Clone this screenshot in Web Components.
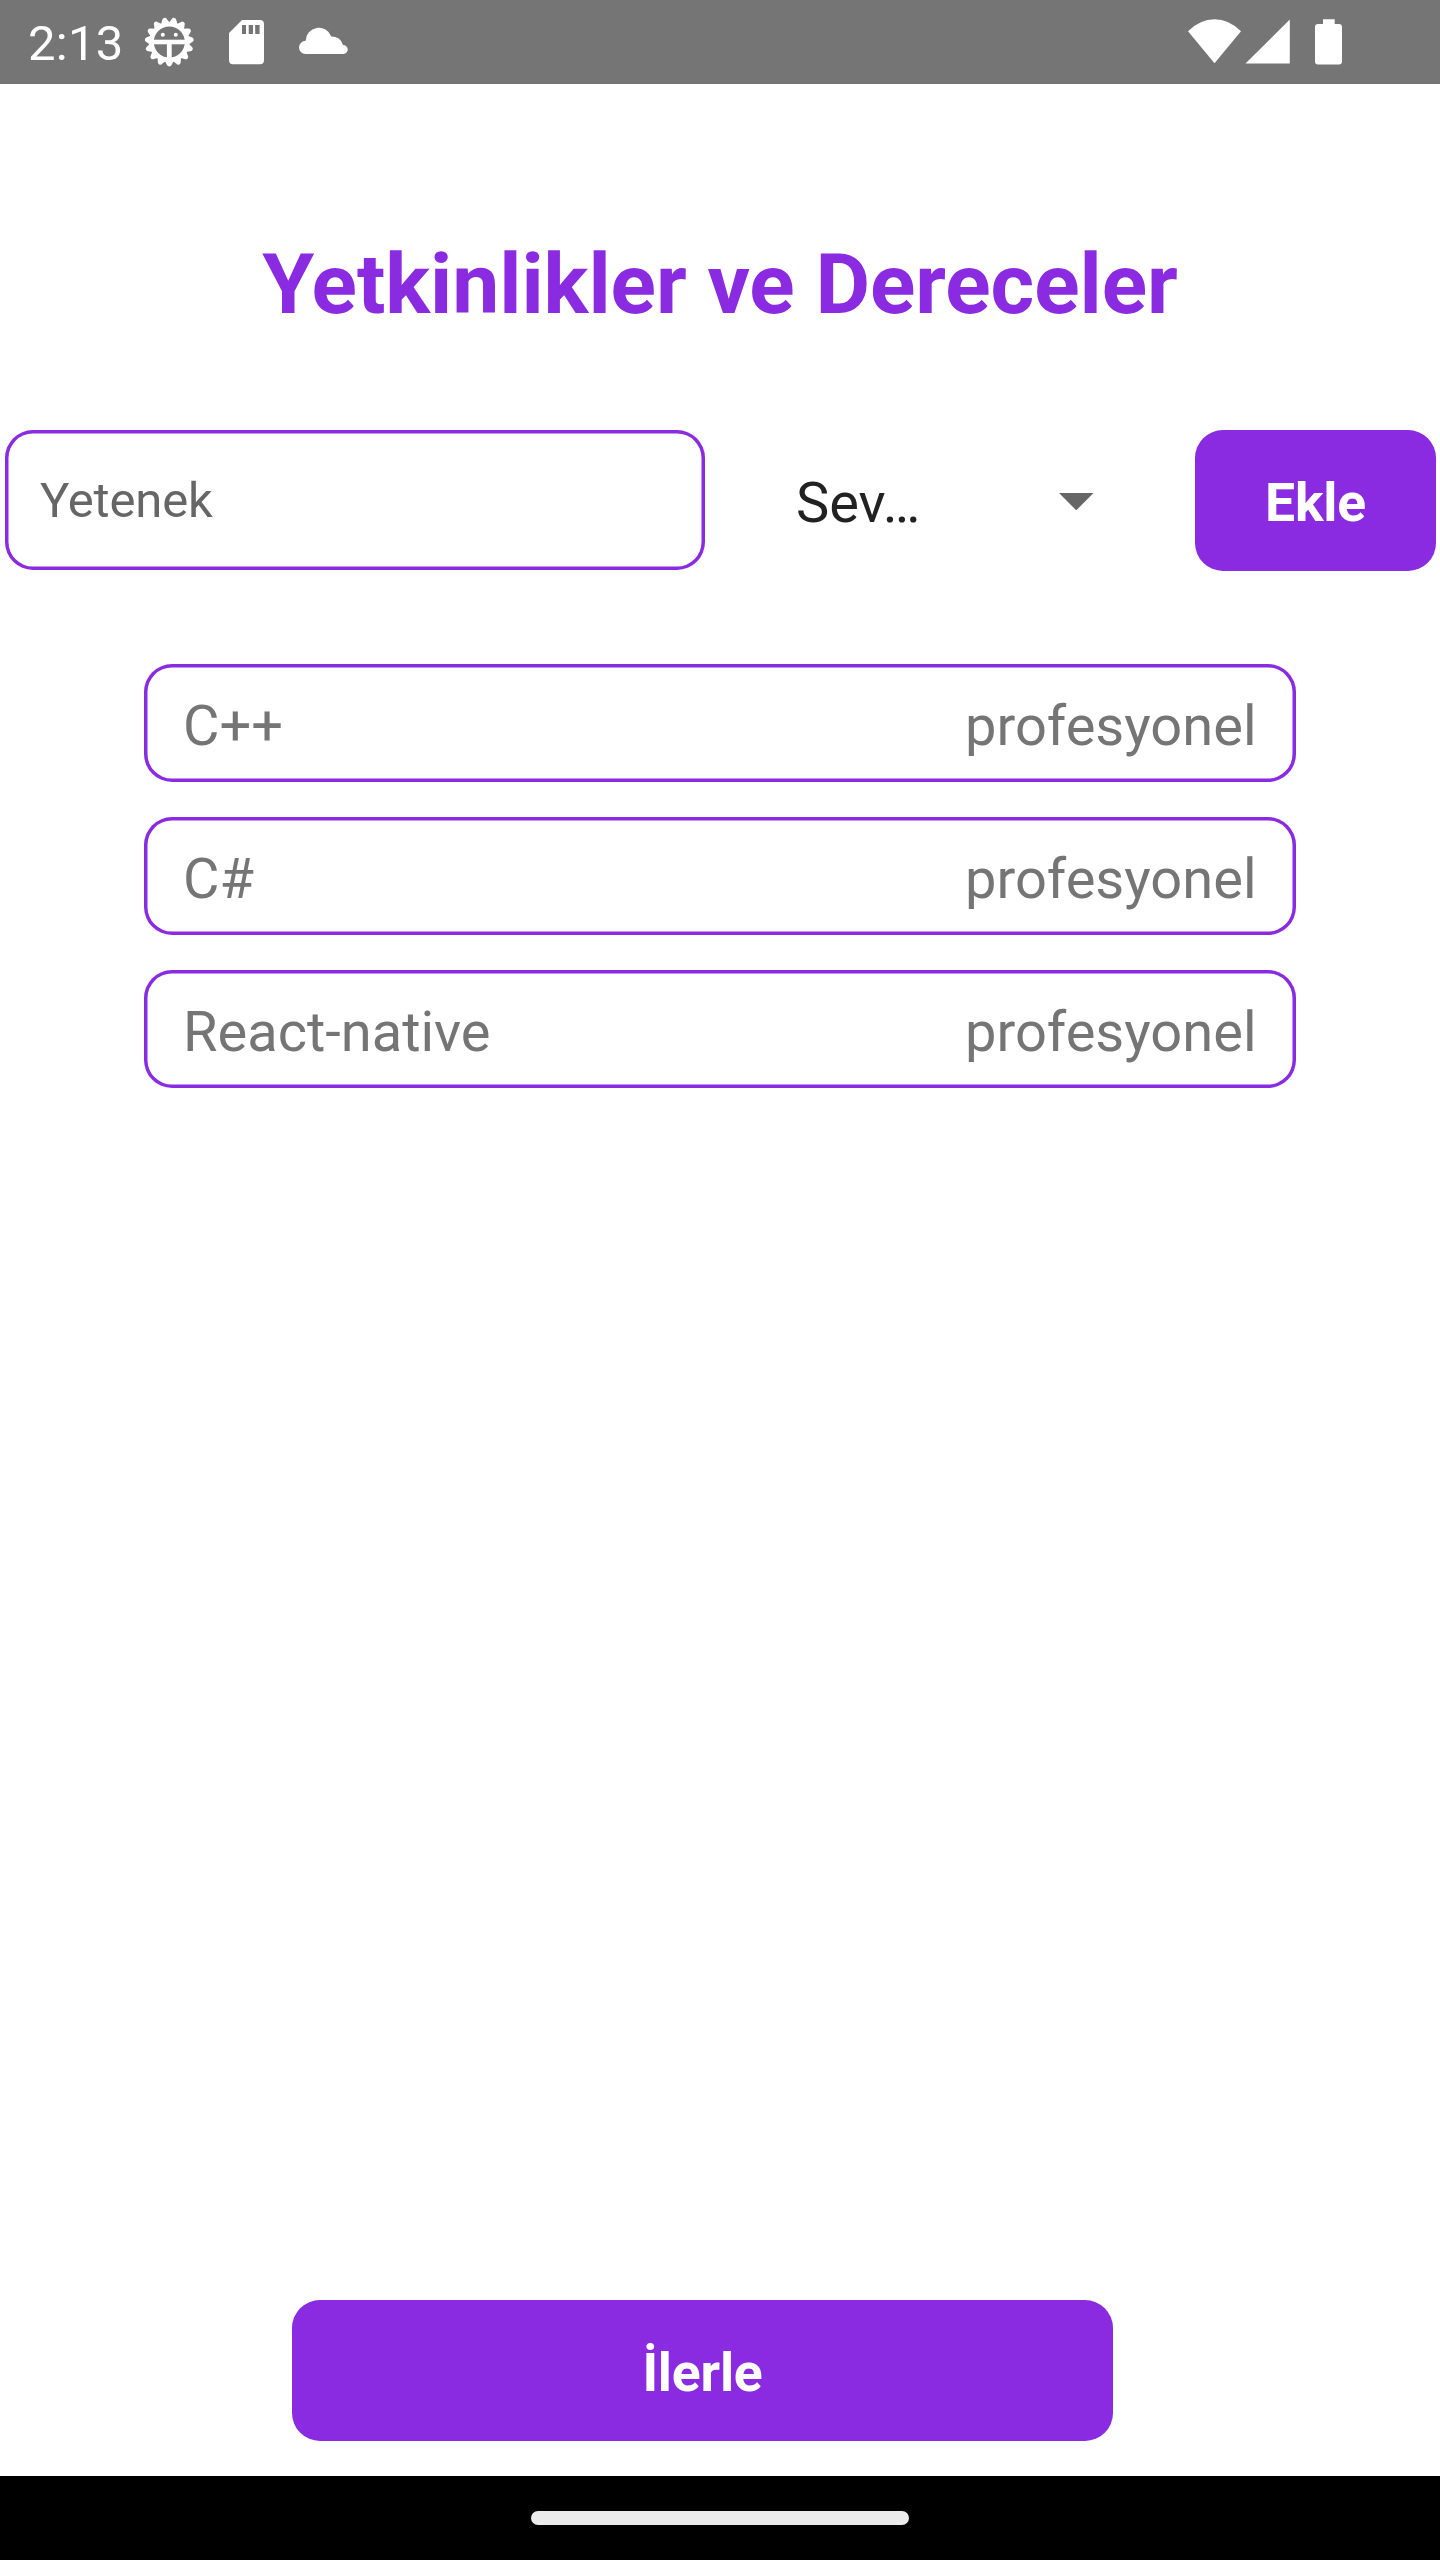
<!DOCTYPE html>
<html lang="tr">
<head>
<meta charset="utf-8">
<title>Yetkinlikler ve Dereceler</title>
<style>
  html, body { margin: 0; background: #fff; }
  body { font-family: Roboto, sans-serif; --accent: #8a2be2; }
</style>
</head>
<body>
<app-screen>
  <status-bar slot="status">2:13</status-bar>
  <page-title>Yetkinlikler ve Dereceler</page-title>
  <entry-row>
    <text-field>Yetenek</text-field>
    <level-picker>Sev…</level-picker>
    <action-button style="width:241px">Ekle</action-button>
  </entry-row>
  <skill-list>
    <skill-item><span>C++</span><span slot="level">profesyonel</span></skill-item>
    <skill-item><span>C#</span><span slot="level">profesyonel</span></skill-item>
    <skill-item><span>React-native</span><span slot="level">profesyonel</span></skill-item>
  </skill-list>
  <action-button slot="footer" style="width:821px;margin-left:292px">İlerle</action-button>
  <nav-bar slot="nav"></nav-bar>
</app-screen>
<script>
const define = (name, html, after) => customElements.define(name, class extends HTMLElement {
  constructor() {
    super();
    this.attachShadow({ mode: 'open' }).innerHTML = html;
    if (after) after(this.shadowRoot);
  }
});

define('app-screen', `
<style>
  :host { display: flex; flex-direction: column; width: 1440px; height: 2560px; overflow: hidden; background: #fff; }
  main { flex: 1; display: flex; flex-direction: column; }
  footer { padding-bottom: 35px; }
</style>
<slot name="status"></slot><main><slot></slot></main><footer><slot name="footer"></slot></footer><slot name="nav"></slot>`);

// 15 evenly spaced teeth, one pointing straight down
const drawTeeth = root => {
  const g = root.querySelector('#teeth');
  for (let i = 0; i < 15; i++) {
    const p = document.createElementNS('http://www.w3.org/2000/svg', 'path');
    p.setAttribute('d', 'M-4.6 18.5L-2.4 22.8A2.5 2.5 0 0 0 2.4 22.8L4.6 18.5Z');
    p.setAttribute('transform', `rotate(${i * 24})`);
    g.append(p);
  }
};

define('status-bar', `
<style>
  :host { display: flex; height: 84px; box-sizing: border-box; padding: 0 98px 0 28px; background: #757575; color: #fff; align-items: flex-start; }
  .time { font-size: 49px; line-height: 58px; letter-spacing: .3px; padding-top: 15px; width: 112px; white-space: nowrap; }
  svg { display: block; fill: #fff; }
  .right { margin-left: auto; }
</style>
<div class="time"><slot></slot></div>
<svg width="220" height="84" viewBox="140 0 220 84">
  <g transform="translate(169.3 42)">
    <g id="teeth"></g>
    <circle r="17.8" fill="none" stroke="#fff" stroke-width="4.6"/>
    <rect x="-17" y="-2.3" width="34" height="4.6"/>
    <rect x="-2.4" y="0" width="4.8" height="17"/>
    <circle cx="-6.5" cy="-7.3" r="2"/><circle cx="6.5" cy="-7.3" r="2"/>
  </g>
  <path fill-rule="evenodd" d="M242 20H260Q264 20 264 24V60Q264 64.3 260 64.3H233Q229 64.3 229 60V33ZM242 25V34H246V25ZM248.7 25V34H253V25ZM255.2 25V34H259.6V25Z"/>
  <path d="M305.5 54A6.6 6.6 0 0 1 305.7 40.8A13.2 13.2 0 0 1 331.3 36.4A11.5 11.5 0 0 1 343 45A4.5 4.5 0 0 1 343.5 54Z"/>
</svg>
<svg class="right" width="160" height="84" viewBox="1182 0 160 84">
  <path d="M1188 31.2Q1200 19.2 1214.5 19.2T1241 31.2L1214.5 63.3Z"/>
  <path d="M1289.8 19.5V63.5H1245.5Z"/>
  <path d="M1323 19.2H1334.7V24H1339Q1342 24 1342 27V61.5Q1342 64.5 1339 64.5H1318Q1315 64.5 1315 61.5V27Q1315 24 1318 24H1323Z"/>
</svg>`, drawTeeth);

define('page-title', `
<style>
  :host { display: block; padding-top: 152px; text-align: center; color: var(--accent); font-size: 84px; line-height: 98px; letter-spacing: -.06px; font-weight: 700; white-space: nowrap; }
</style><slot></slot>`);

define('entry-row', `
<style>
  :host { display: flex; align-items: flex-start; padding: 96px 4px 0 5px; height: 141px; }
</style><slot></slot>`);

define('text-field', `
<style>
  :host { display: block; box-sizing: border-box; width: 700px; height: 140px; border-radius: 28px; box-shadow: inset 0 0 0 3.5px var(--accent); padding: 42px 35px 0; font-size: 49px; line-height: 58px; letter-spacing: -.15px; color: #666; }
</style><slot></slot>`);

define('level-picker', `
<style>
  :host { display: flex; flex: 1; box-sizing: border-box; height: 141px; padding: 40px 101px 0 91px; justify-content: space-between; font-size: 56px; line-height: 66px; color: #212121; }
  svg { display: block; margin-top: 23px; }
</style><span><slot></slot></span>
<svg width="35" height="18"><path d="M0 0H34.5L17.25 17.3Z" fill="#666"/></svg>`);

define('action-button', `
<style>
  :host { display: flex; box-sizing: border-box; height: 141px; border-radius: 28px; background: var(--accent); color: #fff; align-items: center; justify-content: center; font-size: 53.5px; line-height: 64px; letter-spacing: -.2px; font-weight: 700; padding-top: 5px; }
</style><slot></slot>`);

define('skill-list', `
<style>
  :host { display: flex; flex-direction: column; gap: 35px; padding: 93px 144px 0; }
</style><slot></slot>`);

define('skill-item', `
<style>
  :host { display: flex; justify-content: space-between; box-sizing: border-box; height: 118px; border-radius: 28px; box-shadow: inset 0 0 0 3.5px var(--accent); padding: 29px 39.5px 0 39px; font-size: 56px; line-height: 66px; color: #757575; }
</style><slot></slot><slot name="level"></slot>`);

define('nav-bar', `
<style>
  :host { display: flex; height: 84px; background: #000; box-sizing: border-box; padding: 35px 0 0 531px; }
  div { width: 378px; height: 14px; border-radius: 7px; background: #ebebeb; }
</style><div></div>`);
</script>
</body>
</html>
